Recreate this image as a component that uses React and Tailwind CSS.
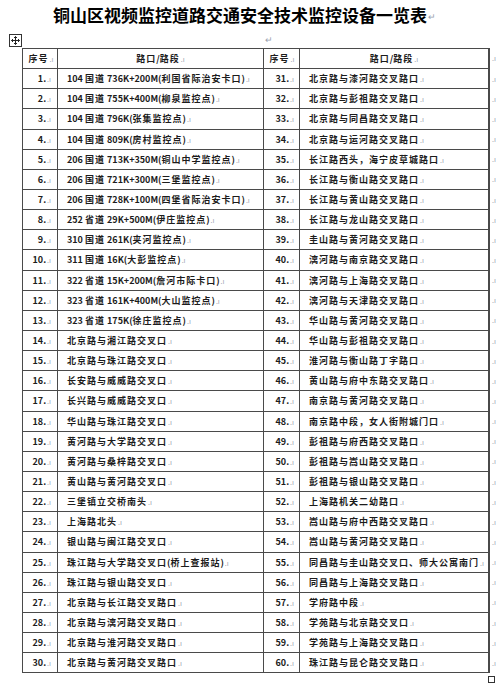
const left = [
  '104 国道 736K+200M(利国省际治安卡口)',
  '104 国道 755K+400M(柳泉监控点)',
  '104 国道 796K(张集监控点)',
  '104 国道 809K(房村监控点)',
  '206 国道 713K+350M(铜山中学监控点)',
  '206 国道 721K+300M(三堡监控点)',
  '206 国道 728K+100M(四堡省际治安卡口)',
  '252 省道 29K+500M(伊庄监控点)',
  '310 国道 261K(夹河监控点)',
  '311 国道 16K(大彭监控点)',
  '322 省道 15K+200M(詹河市际卡口)',
  '323 省道 161K+400M(大山监控点)',
  '323 省道 175K(徐庄监控点)',
  '北京路与湘江路交叉口',
  '北京路与珠江路交叉口',
  '长安路与威威路交叉口',
  '长兴路与威威路交叉口',
  '华山路与珠江路交叉口',
  '黄河路与大学路交叉口',
  '黄河路与桑梓路交叉口',
  '黄山路与黄河路交叉口',
  '三堡镇立交桥南头',
  '上海路北头',
  '银山路与闽江路交叉口',
  '珠江路与大学路交叉口(桥上查报站)',
  '珠江路与银山路交叉口',
  '北京路与长江路交叉路口',
  '北京路与漓河路交叉路口',
  '北京路与淮河路交叉路口',
  '北京路与黄河路交叉路口',
];

const right = [
  '北京路与漆河路交叉路口',
  '北京路与彭祖路交叉路口',
  '北京路与同昌路交叉路口',
  '北京路与运河路交叉路口',
  '长江路西头，海宁皮草城路口',
  '长江路与衡山路交叉路口',
  '长江路与黄山路交叉路口',
  '长江路与龙山路交叉路口',
  '圭山路与黄河路交叉路口',
  '漓河路与南京路交叉路口',
  '漓河路与上海路交叉路口',
  '漓河路与天津路交叉路口',
  '华山路与黄河路交叉路口',
  '华山路与彭祖路交叉路口',
  '淮河路与衡山路丁字路口',
  '黄山路与府中东路交叉路口',
  '南京路与黄河路交叉路口',
  '南京路中段，女人街附城门口',
  '彭祖路与府西路交叉路口',
  '彭祖路与嵩山路交叉路口',
  '彭祖路与银山路交叉路口',
  '上海路机关二幼路口',
  '嵩山路与府中西路交叉路口',
  '嵩山路与黄河路交叉路口',
  '同昌路与圭山路交叉口、师大公寓南门',
  '同昌路与上海路交叉路口',
  '学府路中段',
  '学苑路与北京路交叉口',
  '学苑路与上海路交叉路口',
  '珠江路与昆仑路交叉路口',
];

// latin runs keep normal spacing, CJK runs get the wide spacing
const Text = ({ s }) => (
  <span className="whitespace-pre">
    {s
      .split(/([\x00-\x7F]+)/)
      .filter(Boolean)
      .map((p, i) =>
        /^[\x00-\x7F]+$/.test(p) ? (
          <span key={i} className="tracking-normal">{p}</span>
        ) : (
          <span key={i}>{p}</span>
        )
      )}
    <Mark />
  </span>
);

const Mark = () => (
  <span className="text-[7px] leading-none text-gray-400 tracking-normal ml-[1px] font-normal">.ı</span>
);

const Row = ({ first, children }) => (
  <div className={`flex ${first ? 'h-[21.15px]' : 'h-[20.15px]'}`}>
    <div className={`flex h-full border-l border-r-2 border-b border-[#4a4a4a] ${first ? 'border-t' : ''}`}>
      {children}
    </div>
    <div className="flex items-center pl-[1px]">
      <Mark />
    </div>
  </div>
);

const Cell = ({ w, className = '', last, children }) => (
  <div className={`${w} flex items-center h-full ${last ? '' : 'border-r border-[#4a4a4a]'} ${className}`}>
    {children}
  </div>
);

export default function App() {
  return (
    <div
      className="w-[499px] h-[687px] bg-white overflow-hidden text-[#1c1c1c]"
      style={{ fontFamily: '"Noto Sans CJK SC", "Liberation Sans", sans-serif' }}
    >
      {/* title */}
      <div className="flex items-start pl-[53px] pt-[5px] h-[34px]">
        <h1 className="text-[17px] leading-[20px] font-bold text-black">铜山区视频监控道路交通安全技术监控设备一览表</h1>
        <span className="text-[9px] leading-[20px] text-gray-400 ml-[1px] mt-[2px]">↵</span>
      </div>

      {/* move handle row */}
      <div className="flex h-[14px] items-start">
        <div className="ml-[9px] w-[13px] h-[13px] border border-[#333] flex items-center justify-center bg-white">
          <svg width="9" height="9" viewBox="0 0 9 9" fill="none" stroke="#222" strokeWidth="1">
            <path d="M4.5 0.5v8M0.5 4.5h8" />
            <path d="M3 2l1.5-1.5L6 2M3 7l1.5 1.5L6 7M2 3L0.5 4.5 2 6M7 3l1.5 1.5L7 6" />
          </svg>
        </div>
        <span className="ml-[243px] text-[9px] leading-[12px] text-gray-400">↵</span>
      </div>

      {/* table */}
      <div className="ml-[22px] text-[9px] leading-none tracking-[1px] font-bold">
        <Row first>
          <Cell w="w-[35px]" className="justify-center pl-[2px]"><Text s="序号" /></Cell>
          <Cell w="w-[206px]" className="justify-center"><Text s="路口/路段" /></Cell>
          <Cell w="w-[36px]" className="justify-center pl-[1px]"><Text s="序号" /></Cell>
          <Cell w="w-[188px]" className="justify-center" last><Text s="路口/路段" /></Cell>
        </Row>
        {left.map((l, i) => (
          <Row key={i}>
            <Cell w="w-[35px]" className="justify-end pr-[6px]"><Text s={`${i + 1}.`} /></Cell>
            <Cell w="w-[206px]" className="pl-[9px] overflow-hidden"><Text s={l} /></Cell>
            <Cell w="w-[36px]" className="justify-end pr-[5px]"><Text s={`${i + 31}.`} /></Cell>
            <Cell w="w-[188px]" className="pl-[9px] overflow-hidden" last><Text s={right[i]} /></Cell>
          </Row>
        ))}
      </div>

      {/* resize handle */}
      <div className="ml-[488px] mt-[3px] w-[7px] h-[7px] border border-[#333]" />
    </div>
  );
}
